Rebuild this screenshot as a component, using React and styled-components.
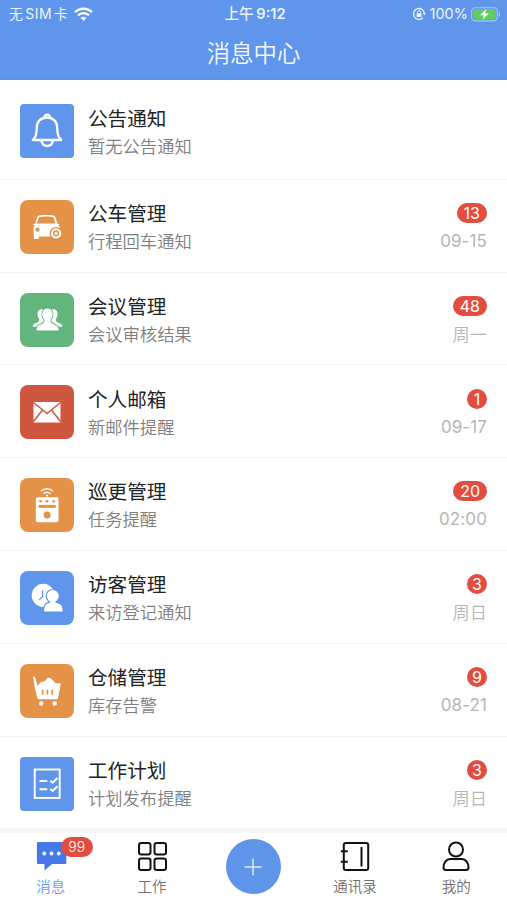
import React from 'react';
import styled, { createGlobalStyle } from 'styled-components';

const GlobalStyle = createGlobalStyle`
  * { box-sizing: border-box; }
  body {
    margin: 0;
    background: #fff;
    font-family: Inter, "Noto Sans CJK SC", sans-serif;
  }
`;

const Screen = styled.main`
  width: 507px;
  height: 900px;
  display: flex;
  flex-direction: column;
  overflow: hidden;
  background: #fff;
`;

const Header = styled.header`
  height: 80px;
  flex: none;
  background: #5f95ea;
  border-bottom: 1px solid #5b91e6;
  color: #fff;
`;

const StatusBar = styled.div`
  height: 28px;
  padding: 0 6px 0 9px;
  display: grid;
  grid-template-columns: 1fr auto 1fr;
  align-items: center;
  font-size: 14.5px;
  line-height: 28px;
  color: #edf4ff;
`;

const StatusGroup = styled.div`
  display: flex;
  align-items: center;
  justify-content: ${(p) => (p.$end ? 'flex-end' : 'flex-start')};
  gap: ${(p) => (p.$end ? 4 : 6)}px;
  white-space: nowrap;
  svg:last-child { margin-left: ${(p) => (p.$end ? -1 : 0)}px; }
`;

const Carrier = styled.span`
  font-size: 14px;
  letter-spacing: 0.4px;
  word-spacing: -2.4px;
`;

const Clock = styled.div`
  font-weight: 600;
  font-size: 14.6px;
  word-spacing: -1px;
  span { font-weight: 500; }
`;

const Title = styled.h1`
  margin: 1px 0 0;
  font-size: 23.4px;
  font-weight: 350;
  line-height: 50px;
  text-align: center;
  color: #f4f8ff;
`;

const List = styled.ul`
  list-style: none;
  margin: 0;
  padding: 4px 0 0;
  flex: none;
  height: 748px;
`;

const Row = styled.li`
  height: ${(p) => (p.$first ? 95.8 : 92.8)}px;
  padding: ${(p) => (p.$first ? 20.4 : 20)}px 20px 0;
  display: flex;
  align-items: flex-start;
  border-bottom: 1px solid #f3f3f3;
`;

const IconTile = styled.div`
  width: 54px;
  height: 54px;
  flex: none;
  border-radius: ${(p) => (p.$square ? 4 : 8)}px;
  background: ${(p) => p.$color};
  svg { display: block; }
`;

const Copy = styled.div`
  flex: 1;
  margin-left: 14px;
  padding-top: 0.2px;
`;

const Name = styled.div`
  font-size: 19.6px;
  line-height: 28px;
  color: #222;
`;

const Note = styled.div`
  font-size: 17.3px;
  line-height: 27px;
  font-weight: 350;
  color: #7e7e7e;
`;

const Meta = styled.div`
  display: flex;
  flex-direction: column;
  align-items: flex-end;
  padding-top: 3.2px;
`;

const Badge = styled.span`
  min-width: 20px;
  height: 20px;
  padding: 0 ${(p) => (p.$wide ? 7 : 0)}px;
  border-radius: 10px;
  display: flex;
  align-items: center;
  justify-content: center;
  background: #e34d40;
  color: #fff;
  font-size: 16px;
  line-height: 20px;
`;

const When = styled.span`
  margin-top: 5px;
  font-size: ${(p) => (p.$numeric ? 17 : 17.2)}px;
  line-height: 27px;
  font-weight: ${(p) => (p.$numeric ? 400 : 350)};
  letter-spacing: 0.1px;
  color: #b5b5b5;
`;

const TabBar = styled.nav`
  height: 72px;
  flex: none;
  border-top: 5px solid #f6f6f6;
  display: grid;
  grid-template-columns: repeat(5, 1fr);
`;

const Tab = styled.div`
  display: flex;
  flex-direction: column;
  align-items: center;
  padding-top: 8px;
  font-size: 14.5px;
  font-weight: 350;
  line-height: 22px;
  color: ${(p) => (p.$active ? '#649bef' : '#707070')};
`;

const TabIcon = styled.div`
  position: relative;
  width: 32px;
  height: 32px;
  margin-bottom: 3px;
  svg { display: block; }
`;

const TabBadge = styled.span`
  position: absolute;
  left: 26px;
  top: -4px;
  width: 32px;
  height: 20px;
  border-radius: 10px;
  background: #e34d40;
  color: #fff;
  font-size: 14px;
  line-height: 20px;
  text-align: center;
`;

const AddButton = styled.button`
  width: 55px;
  height: 55px;
  margin: 6px auto 0;
  padding: 0;
  border: 0;
  border-radius: 50%;
  background: #5f95e9;
  display: grid;
  place-items: center;
`;

const visitorBody = 'M24.200 40.500c0-5 1-7.500 4-8.300l2.200-.7v-3h5v3l2.200.7c3.800 1 5.100 3.300 5.100 8.300z';

const icons = {
  bell: (
    <g fill="none" stroke="#fff" strokeWidth="2.300" strokeLinejoin="round" strokeLinecap="round">
      <path d="M12.800 36c3.100-2.500 4-6 4-12.500 0-5.600 3.700-10 10.200-10s10.200 4.400 10.200 10c0 6.500.9 10 4 12.500z" />
      <path d="M21.500 37c.8 3.500 3 5 5.700 5s4.900-1.500 5.700-5" />
      <path d="M24.500 13c0-3.200 5.400-3.200 5.400 0" />
    </g>
  ),
  car: (
    <g>
      <path fill="#fff" d="M17.300 16.800c.3-.9.9-1.300 1.800-1.400 4.800-.6 9.400-.6 14.300 0 1 .1 1.500.6 1.800 1.400l2.400 7.200h1.500v1h-1c1.200 1 1.900 2.600 1.900 4.200l-1.500 7.300H19v1.300c0 .7-.5 1.200-1.200 1.200h-2.500c-.8 0-1.300-.5-1.300-1.300l-.5-7.100c0-2.500.3-4.400 1.500-5.600h-1.800v-1h1.900z" />
      <path fill="#e49247" d="M19 17.200c5-.9 9.500-.9 14.500 0l2 6.300H16.800z" />
      <circle cx="17.500" cy="29.700" r="2.100" fill="#e49247" />
      <circle cx="36.100" cy="33.400" r="6.500" fill="#e49247" />
      <circle cx="36.100" cy="33.400" r="4.100" fill="none" stroke="#fff" strokeWidth="2.100" />
      <circle cx="36.100" cy="33.400" r="1.700" fill="#fff" />
    </g>
  ),
  people: (
    <g>
      <path fill="#fff" d="M23 16.400c-3.400-.7-5.800 1-5.500 4.600 0 2.200.7 3.900 1.700 4.900.3 2-.6 2.800-4.400 4.600-1.400.6-2 1.500-2.100 3.200h29.600c-.1-1.700-.7-2.600-2.100-3.200-3.800-1.800-4.700-2.600-4.400-4.600 1-1 1.700-2.700 1.700-4.900.3-3.600-2.100-5.300-5.500-4.600z" />
      <path d="M27.500 15.500c-3.900 0-5.500 3-5 6.800.3 2 1 3.500 1.900 4.500.2 2.600-.2 3.300-4.400 5.100-2.600 1-3.500 2.300-3.500 5.600h22c0-3.300-.9-4.600-3.500-5.600-4.200-1.800-4.600-2.500-4.400-5.100.9-1 1.600-2.500 1.900-4.500.5-3.800-1.100-6.800-5-6.800z" fill="#fff" stroke="#62b57d" strokeWidth="1.900" paintOrder="stroke" />
    </g>
  ),
  mail: (
    <g>
      <rect x="13.500" y="17" width="27" height="20.500" rx=".8" fill="#fff" />
      <path d="m13.500 17.500 13.500 11 13.500-11M13.500 36.500 22.500 25M40.500 36.500 31.500 25" fill="none" stroke="#cf5740" strokeWidth="1.500" />
    </g>
  ),
  patrol: (
    <g>
      <path d="M21 13.200c3.300-3.300 8.700-3.300 12 0M23.500 15.800c2-2 5-2 7 0" fill="none" stroke="#fff" strokeWidth="1.600" />
      <circle cx="27" cy="17.400" r="1" fill="#fff" />
      <rect x="15.800" y="19.300" width="22.700" height="25" rx="1.800" fill="#fff" />
      <g fill="#e49247">
        <circle cx="20.600" cy="23.300" r="1.400" />
        <circle cx="27" cy="23.300" r="1.400" />
        <circle cx="33.700" cy="23.300" r="1.400" />
        <rect x="18.700" y="26.900" width="17" height="3" />
        <circle cx="27.100" cy="37.100" r="3.500" />
      </g>
    </g>
  ),
  visitor: (
    <g>
      <circle cx="23.200" cy="24.300" r="11.500" fill="#fff" />
      <path d="M22.500 19.200v6.500l-3.300 3" fill="none" stroke="#5f95ea" strokeWidth="1.300" />
      <g fill="#5f95ea" stroke="#5f95ea" strokeWidth="2.400">
        <circle cx="32.800" cy="25.100" r="6" />
        <path d={visitorBody} />
      </g>
      <g fill="#fff">
        <circle cx="32.800" cy="25.100" r="6" />
        <path d={visitorBody} />
      </g>
    </g>
  ),
  cart: (
    <g>
      <path d="M13.200 12.500c1.300.2 2 .8 2.300 2l2.200 7.600 2.600-3.500 4.500-1.500 2.700-3.300 2.800.2 3.400 3.100 1.800 2.200h4.800c.4 0 .6.300.5.700L38 33.900c-.2.900-.7 1.300-1.700 1.300H19c-1 0-1.600-.5-1.800-1.400L14.400 22z" fill="#fff" />
      <path d="M22.600 25.700v5M27.400 25.700v5M32.200 25.700v5" stroke="#e49247" strokeWidth="1.700" />
      <circle cx="21.200" cy="39.500" r="2.200" fill="#fff" />
      <circle cx="34.700" cy="39.500" r="2.200" fill="#fff" />
    </g>
  ),
  plan: (
    <g fill="none" stroke="#fff" strokeWidth="1.900">
      <rect x="14.700" y="12.500" width="25" height="28.500" />
      <path d="M19.500 24h7.800m3-.3 2.400 2 4.800-4.700M19.500 32.300h7.800m3-.3 2.400 2 4.800-4.700" />
    </g>
  ),
};

const messages = [
  { icon: 'bell', color: '#5f95ea', square: true, name: '公告通知', note: '暂无公告通知' },
  { icon: 'car', color: '#e49247', name: '公车管理', note: '行程回车通知', count: 13, when: '09-15' },
  { icon: 'people', color: '#62b57d', name: '会议管理', note: '会议审核结果', count: 48, when: '周一' },
  { icon: 'mail', color: '#cf5740', name: '个人邮箱', note: '新邮件提醒', count: 1, when: '09-17' },
  { icon: 'patrol', color: '#e49247', name: '巡更管理', note: '任务提醒', count: 20, when: '02:00' },
  { icon: 'visitor', color: '#5f95ea', name: '访客管理', note: '来访登记通知', count: 3, when: '周日' },
  { icon: 'cart', color: '#e49247', name: '仓储管理', note: '库存告警', count: 9, when: '08-21' },
  { icon: 'plan', color: '#5f95ea', square: true, name: '工作计划', note: '计划发布提醒', count: 3, when: '周日' },
];

const WifiIcon = () => (
  <svg width="19" height="15" viewBox="0 0 19 15" fill="none" stroke="#fff" strokeWidth="2.400">
    <path d="M1 5.200c4.700-4.600 12.300-4.600 17 0M4 8.400c3-3 8-3 11 0" />
    <path d="m9.500 14-3-3.100c1.700-1.500 4.300-1.500 6 0z" fill="#fff" stroke="none" />
  </svg>
);

const LockIcon = () => (
  <svg width="14" height="14" viewBox="0 0 14 14" fill="none" stroke="#edf4ff" strokeWidth="1.300">
    <path d="M10.800 11A5.500 5.500 0 1 1 12.500 7" />
    <path d="m10.600 6.300 1.900 2 1.300-2.200z" fill="#edf4ff" stroke="none" />
    <rect x="4.600" y="6.300" width="4.800" height="3.600" rx=".5" fill="#edf4ff" stroke="none" />
    <path d="M5.500 6.500V5.300a1.500 1.500 0 0 1 3 0v1.200" strokeWidth="1" />
  </svg>
);

const BatteryIcon = () => (
  <svg width="30" height="15" viewBox="0 0 30 15">
    <rect x=".7" y=".7" width="25.600" height="13.200" rx="3.600" fill="none" stroke="#a8c8ee" strokeWidth="1.100" />
    <rect x="2.300" y="2.300" width="22.400" height="10" rx="2" fill="#62ce68" />
    <path d="M27.800 5c1.800.6 1.800 4 0 4.600z" fill="#a8c8ee" />
    <path d="m15.300 1.800-6 6.400h3.500l-1.300 4.700 6-6.500H14z" fill="#fff" />
  </svg>
);

function MessageRow({ item, first }) {
  return (
    <Row $first={first}>
      <IconTile $color={item.color} $square={item.square}>
        <svg width="54" height="54" viewBox="0 0 54 54">{icons[item.icon]}</svg>
      </IconTile>
      <Copy>
        <Name>{item.name}</Name>
        <Note>{item.note}</Note>
      </Copy>
      {item.count && (
        <Meta>
          <Badge $wide={item.count > 9}>{item.count}</Badge>
          <When $numeric={/\d/.test(item.when)}>{item.when}</When>
        </Meta>
      )}
    </Row>
  );
}

export default function App() {
  return (
    <Screen>
      <GlobalStyle />
      <Header>
        <StatusBar>
          <StatusGroup><Carrier>无 SIM 卡</Carrier><WifiIcon /></StatusGroup>
          <Clock><span>上午</span> 9:12</Clock>
          <StatusGroup $end><LockIcon /><span>100%</span><BatteryIcon /></StatusGroup>
        </StatusBar>
        <Title>消息中心</Title>
      </Header>
      <List>
        {messages.map((item, i) => <MessageRow key={item.name} item={item} first={i === 0} />)}
      </List>
      <TabBar>
        <Tab $active>
          <TabIcon>
            <svg width="32" height="32" viewBox="0 0 32 32">
              <path d="M3.500 1h26.200c1 0 1.600.6 1.600 1.600v18.800c0 1-.6 1.600-1.600 1.600H17l-7.500 6.500V23h-6c-1 0-1.600-.6-1.600-1.600V2.600C1.900 1.600 2.500 1 3.500 1z" fill="#4679e8" />
              <g fill="#fff"><circle cx="9.300" cy="12.500" r="1.900" /><circle cx="16.500" cy="12.500" r="1.900" /><circle cx="23.700" cy="12.500" r="1.900" /></g>
            </svg>
            <TabBadge>99</TabBadge>
          </TabIcon>
          消息
        </Tab>
        <Tab>
          <TabIcon>
            <svg width="32" height="32" viewBox="0 0 32 32" fill="none" stroke="#111" strokeWidth="2">
              <rect x="3" y="2" width="11.500" height="11.500" rx="2.300" />
              <rect x="18.500" y="2" width="11.500" height="11.500" rx="2.300" />
              <rect x="3" y="17.500" width="11.500" height="11.500" rx="2.300" />
              <rect x="18.500" y="17.500" width="11.500" height="11.500" rx="2.300" />
            </svg>
          </TabIcon>
          工作
        </Tab>
        <AddButton aria-label="新建">
          <svg width="18" height="18" viewBox="0 0 18 18"><path d="M9 .5v17M.5 9h17" stroke="#dfeafb" strokeWidth="1.500" /></svg>
        </AddButton>
        <Tab>
          <TabIcon>
            <svg width="32" height="32" viewBox="0 0 32 32" fill="none" stroke="#111" strokeWidth="2">
              <rect x="4.800" y="2" width="24.400" height="27" rx="2" />
              <path d="M22.500 6v19.500" />
              <path d="M1.800 10.200h7M1.800 20.700h7" />
            </svg>
          </TabIcon>
          通讯录
        </Tab>
        <Tab>
          <TabIcon>
            <svg width="32" height="32" viewBox="0 0 32 32" fill="none" stroke="#111" strokeWidth="2">
              <circle cx="16" cy="8.500" r="7" />
              <path d="M10.500 18h11c4.500 0 7 4.200 7 8.500 0 1.800-.9 2.500-2.500 2.500H6c-1.600 0-2.500-.7-2.500-2.500 0-4.300 2.500-8.500 7-8.500z" />
            </svg>
          </TabIcon>
          我的
        </Tab>
      </TabBar>
    </Screen>
  );
}
